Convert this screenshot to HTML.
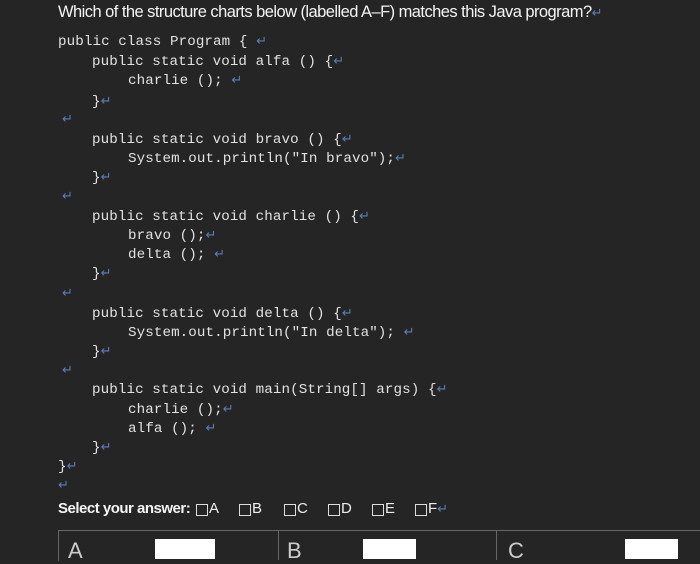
<!DOCTYPE html>
<html><head><meta charset="utf-8"><style>
body{margin:0;width:700px;height:551px;background:#252525;overflow:hidden;position:relative;font-family:"Liberation Mono",monospace;color:#e2e2e2}
.l{position:absolute;font-size:14.2px;line-height:18px;white-space:pre;letter-spacing:0.1px;margin-top:2px}
.a{color:#5a7fb5;font-family:"DejaVu Sans",sans-serif;font-size:13px}
.t{position:absolute;font-family:"Liberation Sans",sans-serif;white-space:pre;color:#f4f4f4}
.bx{position:absolute;width:10px;height:10px;border:1px solid #ddd;top:504px}
.o{position:absolute;font-family:"Liberation Sans",sans-serif;font-size:15px;top:500px;color:#eee}
</style></head><body>
<div class="t" style="left:58px;top:3px;font-size:16.5px;letter-spacing:-0.55px;">Which of the structure charts below (labelled A–F) matches this Java program?<span class="a">↵</span></div>
<div class="l" style="left:58px;top:31px">public class Program { <span class="a">↵</span></div>
<div class="l" style="left:92px;top:51px">public static void alfa () {<span class="a">↵</span></div>
<div class="l" style="left:128px;top:70px">charlie (); <span class="a">↵</span></div>
<div class="l" style="left:92px;top:91px">}<span class="a">↵</span></div>
<div class="l" style="left:62px;top:109px"><span class="a">↵</span></div>
<div class="l" style="left:92px;top:129px">public static void bravo () {<span class="a">↵</span></div>
<div class="l" style="left:128px;top:148px">System.out.println("In bravo");<span class="a">↵</span></div>
<div class="l" style="left:92px;top:167px">}<span class="a">↵</span></div>
<div class="l" style="left:62px;top:186px"><span class="a">↵</span></div>
<div class="l" style="left:92px;top:206px">public static void charlie () {<span class="a">↵</span></div>
<div class="l" style="left:128px;top:225px">bravo ();<span class="a">↵</span></div>
<div class="l" style="left:128px;top:244px">delta (); <span class="a">↵</span></div>
<div class="l" style="left:92px;top:263px">}<span class="a">↵</span></div>
<div class="l" style="left:62px;top:283px"><span class="a">↵</span></div>
<div class="l" style="left:92px;top:303px">public static void delta () {<span class="a">↵</span></div>
<div class="l" style="left:128px;top:322px">System.out.println("In delta"); <span class="a">↵</span></div>
<div class="l" style="left:92px;top:341px">}<span class="a">↵</span></div>
<div class="l" style="left:62px;top:360px"><span class="a">↵</span></div>
<div class="l" style="left:92px;top:379px">public static void main(String[] args) {<span class="a">↵</span></div>
<div class="l" style="left:128px;top:399px">charlie ();<span class="a">↵</span></div>
<div class="l" style="left:128px;top:418px">alfa (); <span class="a">↵</span></div>
<div class="l" style="left:92px;top:437px">}<span class="a">↵</span></div>
<div class="l" style="left:58px;top:456px">}<span class="a">↵</span></div>
<div class="l" style="left:58px;top:475px"><span class="a">↵</span></div>
<div class="t" style="left:58px;top:500px;font-size:15px;letter-spacing:-0.5px"><b>Select your answer:</b></div>
<div class="bx" style="left:196px"></div><div class="o" style="left:209px">A</div>
<div class="bx" style="left:239px"></div><div class="o" style="left:252px">B</div>
<div class="bx" style="left:284px"></div><div class="o" style="left:297px">C</div>
<div class="bx" style="left:328px"></div><div class="o" style="left:341px">D</div>
<div class="bx" style="left:372px"></div><div class="o" style="left:385px">E</div>
<div class="bx" style="left:415px"></div><div class="o" style="left:428px">F<span class="a">↵</span></div>
<div style="position:absolute;left:58px;top:530px;width:650px;height:30px;border-top:1px solid #666;border-left:1px solid #666"></div>
<div style="position:absolute;left:278px;top:530px;width:1px;height:30px;background:#666"></div>
<div style="position:absolute;left:496px;top:530px;width:1px;height:30px;background:#666"></div>
<div class="t" style="left:68px;top:538px;font-size:22px;color:#ccc">A</div>
<div class="t" style="left:287px;top:538px;font-size:22px;color:#ccc">B</div>
<div class="t" style="left:508px;top:538px;font-size:22px;color:#ccc">C</div>
<div style="position:absolute;left:155px;top:539px;width:60px;height:20px;background:#fff"></div>
<div style="position:absolute;left:363px;top:539px;width:53px;height:20px;background:#fff"></div>
<div style="position:absolute;left:625px;top:539px;width:53px;height:20px;background:#fff"></div>
</body></html>
